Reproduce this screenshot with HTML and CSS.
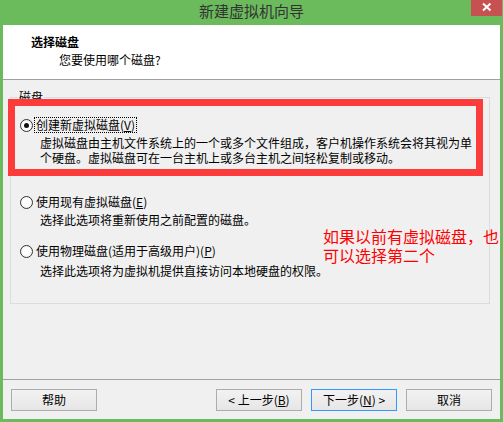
FILE: index.html
```html
<!DOCTYPE html>
<html lang="zh-CN">
<head>
<meta charset="utf-8">
<title>新建虚拟机向导</title>
<link rel="stylesheet" href="styles.css">
</head>
<body>
<div class="window">
  <div class="titlebar">
    <span class="title">新建虚拟机向导</span>
    <span class="close"><svg width="31" height="16" viewBox="0 0 31 16"><path d="M12 3.5 L19.5 10.5 M19.5 3.5 L12 10.5" stroke="#fff" stroke-width="2" fill="none"/></svg></span>
  </div>
  <div class="content">
    <div class="header">
      <div class="h-title">选择磁盘</div>
      <div class="h-sub">您要使用哪个磁盘?</div>
    </div>
    <div class="main">
      <fieldset class="group">
        <legend class="group-label">磁盘</legend>
        <div class="option opt1">
          <div class="opt-row"><span class="radio checked"></span><span class="opt-label focus">创建新虚拟磁盘(<u>V</u>)</span></div>
          <div class="opt-desc">
            <div class="line">虚拟磁盘由主机文件系统上的一个或多个文件组成，客户机操作系统会将其视为单</div>
            <div class="line">个硬盘。虚拟磁盘可在一台主机上或多台主机之间轻松复制或移动。</div>
          </div>
        </div>
        <div class="option opt2">
          <div class="opt-row"><span class="radio"></span><span class="opt-label">使用现有虚拟磁盘(<u>E</u>)</span></div>
          <div class="opt-desc"><div class="line">选择此选项将重新使用之前配置的磁盘。</div></div>
        </div>
        <div class="option opt3">
          <div class="opt-row"><span class="radio"></span><span class="opt-label">使用物理磁盘(适用于高级用户)(<u>P</u>)</span></div>
          <div class="opt-desc"><div class="line">选择此选项将为虚拟机提供直接访问本地硬盘的权限。</div></div>
        </div>
      </fieldset>
    </div>
    <div class="footer">
      <button class="btn help">帮助</button>
      <button class="btn">&lt; 上一步(<u>B</u>)</button>
      <button class="btn default">下一步(<u>N</u>) &gt;</button>
      <button class="btn">取消</button>
    </div>
  </div>
  <div class="mark-box"></div>
  <div class="mark-note"><div>如果以前有虚拟磁盘，也</div><div>可以选择第二个</div></div>
</div>
</body>
</html>
```
FILE: styles.css
```css
* { box-sizing: border-box; }
html, body { margin: 0; padding: 0; }
body {
  width: 503px;
  height: 422px;
  overflow: hidden;
  font-family: "Noto Sans CJK SC", "Noto Sans", sans-serif;
  font-size: 12px;
  color: #000;
}
.window {
  position: relative;
  width: 503px;
  height: 422px;
  background: #6bbb5c;
  padding: 0 3px 3px 3px;
  display: flex;
  flex-direction: column;
}
.titlebar {
  height: 25px;
  display: flex;
  justify-content: center;
  position: relative;
}
.title {
  font-size: 15px;
  line-height: 22px;
  color: #333;
}
.close {
  position: absolute;
  right: -2px;
  top: 0;
  width: 31px;
  height: 16px;
  background: #c75050;
  display: flex;
}
.content {
  flex: 1;
  background: #f0f0f0;
  display: flex;
  flex-direction: column;
}
.header {
  height: 55px;
  background: #fff;
  border-bottom: 1px solid #a0a0a0;
  padding: 9px 0 0 28px;
}
.h-title {
  font-weight: bold;
  line-height: 16px;
}
.h-sub {
  line-height: 16px;
  margin-top: 2px;
  padding-left: 28px;
}
.main {
  flex: 1;
}
.group {
  margin: 9px 10px 0 7px;
  height: 215px;
  border: 1px solid #dcdcdc;
  padding: 12px 9px 0 9px;
  min-width: 0;
}
.group-label {
  padding: 0 1px;
  margin-left: -2px;
  line-height: 16px;
}
.opt2 { margin-top: 29px; }
.opt3 { margin-top: 16px; }
.opt3 .opt-desc { margin-top: 4px; }
.opt-row {
  display: flex;
  align-items: center;
  height: 16px;
}
.radio {
  width: 13px;
  height: 13px;
  border-radius: 50%;
  border: 1px solid #333;
  background: radial-gradient(circle, #fff 0, #fff 40%, #e6e6e6 100%);
  position: relative;
  flex: none;
}
.radio.checked::after {
  content: "";
  position: absolute;
  left: 3px;
  top: 3px;
  width: 5px;
  height: 5px;
  border-radius: 50%;
  background: #111;
}
.opt-label {
  margin-left: 1px;
  line-height: 14px;
  padding: 0 1px;
  border: 1px dotted transparent;
}
.opt-label.focus {
  border-color: #000;
}
.opt-desc {
  margin-top: 2px;
  padding-left: 20px;
}
.line {
  height: 15px;
  line-height: 15px;
}
.footer {
  height: 40px;
  border-top: 1px solid #a0a0a0;
  padding: 9px 8px 0 8px;
  display: flex;
  gap: 9px;
}
.btn {
  width: 86px;
  height: 22px;
  border: 1px solid #acacac;
  background: linear-gradient(#f2f2f2, #e6e6e6);
  font-family: "Noto Sans CJK SC", "Noto Sans", sans-serif;
  font-size: 12px;
  line-height: 18px;
  color: #000;
  padding: 0;
}
.btn.help { margin-right: auto; }
.btn.default { border-color: #3399ff; }
.mark-box {
  position: absolute;
  left: 8px;
  top: 99px;
  width: 475px;
  height: 77px;
  border: 7px solid #fc3b3b;
}
.mark-note {
  position: absolute;
  left: 323px;
  top: 227px;
  font-size: 16px;
  line-height: 19px;
  color: #ff0000;
  white-space: nowrap;
}
```
